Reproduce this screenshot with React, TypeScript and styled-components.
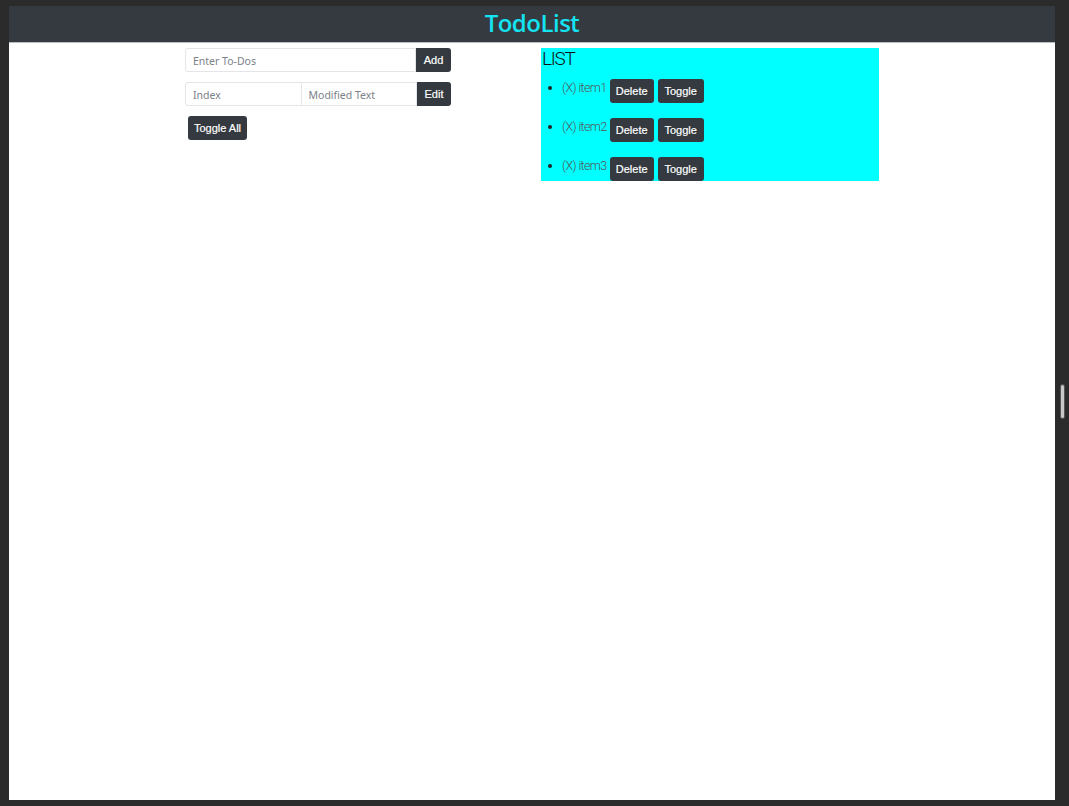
import React from "react";
import styled, { createGlobalStyle } from "styled-components";

const Global = createGlobalStyle`
  html, body { margin: 0; padding: 0; background: #2b2b2b; }
  body { padding: 6px 14px 6px 9px; overflow: hidden; }
  * { box-sizing: border-box; }
`;

const Page = styled.div`
  position: relative;
  background: #ffffff;
  height: 794px;
  display: flex;
  flex-direction: column;
`;

const Header = styled.header`
  height: 37px;
  background: #343a40;
  border-bottom: 1px solid #b9bcc0;
  display: flex;
  align-items: center;
  justify-content: center;
  padding-bottom: 3px;
`;

const Title = styled.h1`
  margin: 0;
  font-family: "Open Sans", "Noto Sans", sans-serif;
  font-weight: 600;
  font-size: 24px;
  letter-spacing: -0.5px;
  color: #14e3f1;
  line-height: 1;
`;

const Main = styled.main`
  display: grid;
  grid-template-columns: 266px 338px;
  column-gap: 90px;
  justify-content: center;
  align-items: start;
  margin-top: 5px;
`;

const FormCol = styled.div`
  display: flex;
  flex-direction: column;
  gap: 10px;
  align-items: flex-start;
`;

const InputGroup = styled.div`
  display: flex;
  width: 266px;
  height: 24px;
`;

const Input = styled.input<{ $first?: boolean }>`
  flex: 1 1 0;
  min-width: 0;
  height: 24px;
  border: 1px solid #e3e5e8;
  border-left-width: ${(p) => (p.$first ? "1px" : "0")};
  border-radius: ${(p) => (p.$first ? "3px 0 0 3px" : "0")};
  padding: 2px 7px 0;
  font-family: "Noto Sans", "Open Sans", sans-serif;
  font-size: 10.5px;
  color: #495057;
  outline: none;
  &::placeholder { color: #7b8188; }
`;

const Button = styled.button<{ $grouped?: boolean; $w?: number }>`
  height: 24px;
  width: ${(p) => (p.$w ? `${p.$w}px` : "auto")};
  padding: 0;
  white-space: nowrap;
  background: #343a40;
  color: #ffffff;
  border: none;
  border-radius: ${(p) => (p.$grouped ? "0 3px 3px 0" : "3px")};
  font-family: "Liberation Sans", Arial, sans-serif;
  font-size: 11px;
  font-weight: 400;
  -webkit-text-stroke: 0.2px #ffffff;
  cursor: pointer;
`;

const ToggleAll = styled(Button)`
  margin-left: 3px;
`;

const ListBox = styled.section`
  background: #00ffff;
  height: 133px;
`;

const ListTitle = styled.h2`
  margin: 0;
  padding-left: 1px;
  font-family: Roboto, "Noto Sans", sans-serif;
  font-weight: 300;
  font-size: 19px;
  letter-spacing: -1.3px;
  line-height: 22px;
  color: #111;
`;

const Items = styled.ul`
  margin: 9px 0 0 0;
  padding: 0 0 0 21px;
  display: flex;
  flex-direction: column;
  gap: 15px;
`;

const Item = styled.li`
  font-family: Roboto, "Noto Sans", sans-serif;
  font-weight: 300;
  font-size: 12.5px;
  letter-spacing: -0.6px;
  color: #555;
  &::marker { color: #222; font-size: 12px; }
`;

const ItemRow = styled.div`
  display: inline-flex;
  align-items: flex-start;
  gap: 4px;
  vertical-align: top;
`;

const ItemText = styled.span`
  line-height: 18px;
  margin-right: -1px;
`;

const ScrollHandle = styled.div`
  position: absolute;
  right: -9px;
  top: 379px;
  width: 3px;
  height: 33px;
  border-radius: 2px;
  background: #c8c8c8;
  box-shadow: 0 0 0 1px #555;
`;

const items = ["item1", "item2", "item3"];

export default function App() {
  return (
    <>
      <Global />
      <Page>
        <Header>
          <Title>TodoList</Title>
        </Header>
        <Main>
          <FormCol>
            <InputGroup>
              <Input $first placeholder="Enter To-Dos" />
              <Button $grouped $w={35}>Add</Button>
            </InputGroup>
            <InputGroup>
              <Input $first placeholder="Index" />
              <Input placeholder="Modified Text" />
              <Button $grouped $w={34}>Edit</Button>
            </InputGroup>
            <ToggleAll $w={59}>Toggle All</ToggleAll>
          </FormCol>
          <ListBox>
            <ListTitle>LIST</ListTitle>
            <Items>
              {items.map((it) => (
                <Item key={it}>
                  <ItemRow>
                    <ItemText>(X) {it}</ItemText>
                    <Button $w={44}>Delete</Button>
                    <Button $w={46}>Toggle</Button>
                  </ItemRow>
                </Item>
              ))}
            </Items>
          </ListBox>
        </Main>
        <ScrollHandle />
      </Page>
    </>
  );
}
